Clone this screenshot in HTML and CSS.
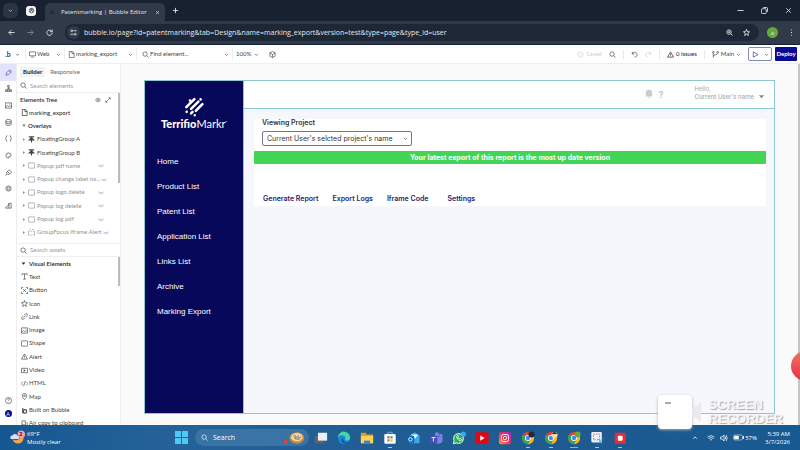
FILE: index.html
```html
<!DOCTYPE html>
<html lang="en">
<head>
  <meta charset="UTF-8">
  <title>Patentmarking | Bubble Editor</title>
  <link rel="stylesheet" href="styles.css">
</head>
<body>
  <svg class="sprite" aria-hidden="true">
    <symbol id="chevron" viewBox="0 0 16 16"><path d="M3 6l5 5 5-5"/></symbol>
    <symbol id="search" viewBox="0 0 16 16"><circle cx="7" cy="7" r="5"/><path d="M11 11l4 4"/></symbol>
    <symbol id="file" viewBox="0 0 16 16"><path d="M3 1h7l4 4v10H3zM9 1v5h5"/></symbol>
    <symbol id="caret" viewBox="0 0 16 16"><path class="solid" d="M5 4l6 4-6 4z"/></symbol>
    <symbol id="caret-down" viewBox="0 0 16 16"><path class="solid" d="M2 5h12l-6 7z"/></symbol>
    <symbol id="float" viewBox="0 0 16 16"><path d="M2 2h12M8 15V6M3 9l5-5 5 5z" class="thick"/></symbol>
    <symbol id="box" viewBox="0 0 16 16"><rect x="1" y="2" width="14" height="12" rx="1"/></symbol>
    <symbol id="focus" viewBox="0 0 16 16"><path d="M1 14V5h3M6 5h4M12 5h3v9M1 14h3M6 14h4M12 14h3M3 1h3M9 1h4"/></symbol>
    <symbol id="closed-eye" viewBox="0 0 16 16"><path d="M1 6c3 4 11 4 14 0M4 9l-1 2M8 10v3M12 9l1 2"/></symbol>
    <symbol id="image" viewBox="0 0 16 16"><path d="M1 2h14v12H1zM1 12l5-4 3 3 3-3 3 3M9 5h2"/></symbol>
    <symbol id="alert" viewBox="0 0 16 16"><path d="M8 2l7 12H1zM8 6v4M8 11v1"/></symbol>
    <symbol id="link" viewBox="0 0 16 16"><path d="M6 10l4-4M7 5l3-3q2-1 4 0 1 2 0 4l-3 3M9 11l-3 3q-2 1-4 0-1-2 0-4l3-3"/></symbol>
    <symbol id="star" viewBox="0 0 16 16"><path d="M8 1l2 5 5 .4-4 3.300 1.300 5.300L8 12l-4.300 3L5 9.700 1 6.400 6 6z"/></symbol>
    <symbol id="undo" viewBox="0 0 16 16"><path d="M3 2v5h5M3 6c3-5 11-4 11 3 0 3-3 5-6 5"/></symbol>
    <symbol id="back" viewBox="0 0 16 16"><path d="M15 8H2M8 2L2 8l6 6"/></symbol>
    <symbol id="close" viewBox="0 0 16 16"><path d="M3 3l10 10M13 3L3 13"/></symbol>
    <symbol id="plus" viewBox="0 0 16 16"><path d="M8 2v12M2 8h12"/></symbol>
    <symbol id="help" viewBox="0 0 16 16"><circle cx="8" cy="8" r="7"/><path d="M6 6c0-3 4-3 4 0 0 1-2 2-2 3M8 11v1"/></symbol>
    <symbol id="chrome" viewBox="0 0 32 32">
      <circle class="c-red" cx="16" cy="16" r="14"/>
      <path class="c-green" d="M16 16L4 9a14 14 0 0 0 12 21l6-11z"/>
      <path class="c-yellow" d="M16 30a14 14 0 0 0 12-21H16l6 11z"/>
      <circle class="c-white" cx="16" cy="16" r="7"/><circle class="c-blue" cx="16" cy="16" r="5"/>
    </symbol>
  </svg>

  <div class="tabs">
    <button class="tab-list" aria-label="Search tabs"><svg class="icon xs"><use href="#chevron"/></svg></button>
    <button class="pinned" aria-label="Pinned tab"><svg class="icon" viewBox="0 0 16 16"><circle cx="8" cy="8" r="5"/><path d="M8 3v5l4 3M8 8l-4 3M4 5l4 3 4-3"/></svg></button>
    <div class="tab">
      <b class="favicon">b</b>
      <span class="tab-title">Patentmarking | Bubble Editor</span>
      <button aria-label="Close tab"><svg class="icon xs"><use href="#close"/></svg></button>
    </div>
    <button class="new-tab" aria-label="New tab"><svg class="icon"><use href="#plus"/></svg></button>
    <div class="window-buttons">
      <button aria-label="Minimize"><svg class="icon" viewBox="0 0 16 16"><path d="M1 8h14"/></svg></button>
      <button aria-label="Restore"><svg class="icon" viewBox="0 0 16 16"><rect x="1" y="4" width="11" height="11" rx="2"/><path d="M5 1h7q3 0 3 3v7"/></svg></button>
      <button aria-label="Close"><svg class="icon"><use href="#close"/></svg></button>
    </div>
  </div>

  <div class="browser-bar">
    <button aria-label="Back"><svg class="icon"><use href="#back"/></svg></button>
    <button class="dim" aria-label="Forward"><svg class="icon flip"><use href="#back"/></svg></button>
    <button aria-label="Reload"><svg class="icon" viewBox="0 0 16 16"><path d="M14 8a6 6 0 1 1-2-4l2 2M14 1v5H9"/></svg></button>
    <div class="address">
      <span class="site-info"><svg class="icon" viewBox="0 0 16 16"><circle cx="4" cy="4" r="2"/><path d="M8 4h7M1 12h7"/><circle cx="12" cy="12" r="2"/></svg></span>
      <input type="text" aria-label="Address" value="bubble.io/page?id=patentmarking&amp;tab=Design&amp;name=marking_export&amp;version=test&amp;type=page&amp;type_id=user">
      <button aria-label="Zoom"><svg class="icon" viewBox="0 0 16 16"><use href="#search"/><path d="M5 7h4M7 5v4"/></svg></button>
      <button aria-label="Bookmark"><svg class="icon"><use href="#star"/></svg></button>
    </div>
    <button class="profile" aria-label="Profile">a</button>
    <button aria-label="Browser menu"><svg class="icon" viewBox="0 0 16 16"><path class="thick" d="M8 1v2M8 7v2M8 13v2"/></svg></button>
  </div>

  <div class="editor-bar">
    <button class="bubble-menu"><b>.b</b><svg class="icon xs"><use href="#chevron"/></svg></button>
    <button class="pick web"><svg class="icon" viewBox="0 0 16 16"><path d="M1 2h14v9H1zM5 14h6"/></svg><span>Web</span><svg class="icon xs"><use href="#chevron"/></svg></button>
    <button class="pick page-pick"><svg class="icon"><use href="#file"/></svg><span>marking_export</span><svg class="icon xs"><use href="#chevron"/></svg></button>
    <button class="pick find"><svg class="icon"><use href="#search"/></svg><span>Find element...</span><svg class="icon xs"><use href="#chevron"/></svg></button>
    <button class="pick zoom"><span>100%</span><svg class="icon xs"><use href="#chevron"/></svg></button>
    <button class="cube" aria-label="Components"><svg class="icon" viewBox="0 0 16 16"><path d="M8 1l6 3v8l-6 3-6-3V4zM2 4l6 4 6-4M8 8v7"/></svg></button>
    <div class="actions">
      <span class="saved"><svg class="icon" viewBox="0 0 16 16"><circle cx="8" cy="8" r="6"/><path d="M5 8l2 2 4-4"/></svg>Saved</span>
      <button aria-label="Search"><svg class="icon"><use href="#search"/></svg></button>
      <i class="rule"></i>
      <button aria-label="Undo"><svg class="icon"><use href="#undo"/></svg></button>
      <button class="faded" aria-label="Redo"><svg class="icon flip"><use href="#undo"/></svg></button>
      <i class="rule"></i>
      <button class="issues"><svg class="icon"><use href="#alert"/></svg>0 issues</button>
      <i class="rule"></i>
      <button class="branch"><svg class="icon" viewBox="0 0 16 16"><circle cx="3" cy="3" r="2"/><circle cx="13" cy="3" r="2"/><path d="M3 5v10M13 5c0 5-10 2-10 7"/></svg>Main<svg class="icon xs"><use href="#chevron"/></svg></button>
      <button class="preview" aria-label="Preview"><svg class="icon" viewBox="0 0 16 16"><path d="M3 2l11 6-11 6z"/></svg><svg class="icon xs"><use href="#chevron"/></svg></button>
      <button class="deploy">Deploy</button>
    </div>
  </div>

  <div class="workspace">
    <nav class="rail">
      <div class="rail-top">
        <a href="#design" class="active" aria-label="Design"><svg class="icon" viewBox="0 0 16 16"><path d="M2 14l2-6 7-6 4 4-7 7zM9 4l4 4"/></svg></a>
        <a href="#workflow" aria-label="Workflow"><svg class="icon" viewBox="0 0 16 16"><path d="M6 1h4v4H6zM8 5v5M3 11l5-4 5 4M1 11h4v4H1zM6 11h4v4H6zM11 11h4v4h-4z"/></svg></a>
        <a href="#views" aria-label="Views"><svg class="icon"><use href="#image"/></svg></a>
        <a href="#data" aria-label="Data"><svg class="icon" viewBox="0 0 16 16"><ellipse cx="8" cy="4" rx="6" ry="3"/><path d="M2 4v8c0 4 12 4 12 0V4M2 8c0 4 12 4 12 0"/></svg></a>
        <a href="#api" aria-label="API"><svg class="icon" viewBox="0 0 16 16"><path d="M5 1C1 1 5 7 1 8c4 1 0 7 4 7M11 1c4 0 0 6 4 7-4 1 0 7-4 7"/></svg></a>
        <a href="#styles" aria-label="Styles"><svg class="icon" viewBox="0 0 16 16"><path d="M8 14a6 6 0 1 1 6-6c0 3-3 2-5 2s1 4-1 4zM5 7h1M9 5h1"/></svg></a>
        <a href="#plugins" aria-label="Plugins"><svg class="icon" viewBox="0 0 16 16"><path d="M1 15l4-4M5 5l6 6M6 5l4-3 5 5-4 4-4 2-4-4z"/></svg></a>
        <a href="#settings" aria-label="Settings"><svg class="icon" viewBox="0 0 16 16"><circle cx="8" cy="8" r="6"/><circle cx="8" cy="8" r="3"/></svg></a>
        <a href="#logs" aria-label="Logs"><svg class="icon" viewBox="0 0 16 16"><path d="M1 14l4-5 3-1 1-5h5v11zM9 3v11"/></svg></a>
      </div>
      <div class="rail-bottom">
        <a href="#help" aria-label="Help"><svg class="icon"><use href="#help"/></svg></a>
        <a href="#account" class="account">A</a>
      </div>
    </nav>

    <aside class="panel">
      <div class="panel-tabs">
        <button class="selected">Builder</button>
        <button>Responsive</button>
      </div>
      <label class="search-box"><svg class="icon"><use href="#search"/></svg><input type="text" placeholder="Search elements" aria-label="Search elements"></label>
      <div class="tree-scroll">
        <div class="tree-head">
          <h2>Elements Tree</h2>
          <button aria-label="Toggle visibility"><svg class="icon" viewBox="0 0 16 16"><path d="M1 8c4-6 10-6 14 0-4 6-10 6-14 0z"/><circle cx="8" cy="8" r="2"/></svg></button>
          <button aria-label="Expand"><svg class="icon" viewBox="0 0 16 16"><path d="M2 14L14 2M9 2h5v5M2 9v5h5"/></svg></button>
        </div>
        <ul class="tree">
          <li class="root"><svg class="icon"><use href="#file"/></svg>marking_export</li>
          <li class="group"><svg class="icon xs"><use href="#caret-down"/></svg>Overlays</li>
          <li><svg class="icon xs"><use href="#caret"/></svg><svg class="icon"><use href="#float"/></svg><span>FloatingGroup A</span></li>
          <li><svg class="icon xs"><use href="#caret"/></svg><svg class="icon"><use href="#float"/></svg><span>FloatingGroup B</span></li>
          <li class="hidden-item"><svg class="icon xs"><use href="#caret"/></svg><svg class="icon"><use href="#box"/></svg><span>Popup pdf name</span><svg class="icon eye"><use href="#closed-eye"/></svg></li>
          <li class="hidden-item"><svg class="icon xs"><use href="#caret"/></svg><svg class="icon"><use href="#box"/></svg><span>Popup change label na...</span><svg class="icon eye"><use href="#closed-eye"/></svg></li>
          <li class="hidden-item"><svg class="icon xs"><use href="#caret"/></svg><svg class="icon"><use href="#box"/></svg><span>Popup logo delete</span><svg class="icon eye"><use href="#closed-eye"/></svg></li>
          <li class="hidden-item"><svg class="icon xs"><use href="#caret"/></svg><svg class="icon"><use href="#box"/></svg><span>Popup log delete</span><svg class="icon eye"><use href="#closed-eye"/></svg></li>
          <li class="hidden-item"><svg class="icon xs"><use href="#caret"/></svg><svg class="icon"><use href="#box"/></svg><span>Popup log pdf</span><svg class="icon eye"><use href="#closed-eye"/></svg></li>
          <li class="hidden-item"><svg class="icon xs"><use href="#caret"/></svg><svg class="icon"><use href="#focus"/></svg><span>GroupFocus Iframe Alert</span><svg class="icon eye"><use href="#closed-eye"/></svg></li>
        </ul>
      </div>
      <label class="search-box assets"><svg class="icon"><use href="#search"/></svg><input type="text" placeholder="Search assets" aria-label="Search assets"></label>
      <div class="palette-scroll">
        <ul class="palette">
          <li class="group"><svg class="icon xs"><use href="#caret-down"/></svg>Visual Elements</li>
          <li><svg class="icon" viewBox="0 0 16 16"><path d="M2 5V2h12v3M8 2v12M5 14h6"/></svg>Text</li>
          <li><svg class="icon" viewBox="0 0 16 16"><path d="M1 5V1h4M11 1h4v4M15 11v4h-4M5 15H1v-4M5 5l6 6M11 5l-6 6"/></svg>Button</li>
          <li><svg class="icon"><use href="#star"/></svg>Icon</li>
          <li><svg class="icon"><use href="#link"/></svg>Link</li>
          <li><svg class="icon"><use href="#image"/></svg>Image</li>
          <li><svg class="icon"><use href="#box"/></svg>Shape</li>
          <li><svg class="icon"><use href="#alert"/></svg>Alert</li>
          <li><svg class="icon" viewBox="0 0 16 16"><path d="M1 3h14v10H1z"/><path class="solid" d="M6 5l5 3-5 3z"/></svg>Video</li>
          <li><svg class="icon" viewBox="0 0 16 16"><path d="M4 4L0 8l4 4M12 4l4 4-4 4M10 2L6 14"/></svg>HTML</li>
          <li><svg class="icon" viewBox="0 0 16 16"><path d="M8 15C0 7 3 1 8 1s8 6 0 14z"/><circle cx="8" cy="6" r="2"/></svg>Map</li>
          <li><svg class="icon" viewBox="0 0 16 16"><path class="thick" d="M4 2v12"/><circle class="thick" cx="9" cy="10" r="4"/></svg>Built on Bubble</li>
          <li><svg class="icon" viewBox="0 0 16 16"><path d="M2 2h8v9H2zM5 14h9V5"/></svg>Air copy to clipboard</li>
        </ul>
      </div>
    </aside>

    <main class="canvas">
      <div class="page">
        <nav class="side-menu">
          <div class="brand">
            <svg class="brand-mark" viewBox="0 0 60 60"><path d="M9 33L31 11M22 38L42 18M35 43L53 25M19 15h0M10 46h0M48 12h0M32 55h0M22 50l4-4"/></svg>
            <div class="brand-name"><b>Terrifio</b>Markr<sup>&middot;</sup></div>
          </div>
          <a href="#home">Home</a>
          <a href="#products">Product List</a>
          <a href="#patents">Patent List</a>
          <a href="#applications">Application List</a>
          <a href="#links">Links List</a>
          <a href="#archive">Archive</a>
          <a href="#export">Marking Export</a>
        </nav>
        <div class="page-main">
          <header class="page-header">
            <svg class="bell" viewBox="0 0 16 16"><path d="M2 12l1-2V6a5 5 0 0 1 10 0v4l1 2zM6 13h4l-2 2z"/></svg>
            <b class="question">?</b>
            <div class="user">Hello,<br><b>Current User's name</b></div>
            <svg class="icon user-caret"><use href="#caret-down"/></svg>
          </header>
          <section class="card">
            <label class="project-label" for="project">Viewing Project</label>
            <div class="select-wrap">
              <select id="project"><option>Current User's selcted project's name</option></select>
              <svg class="icon xs"><use href="#chevron"/></svg>
            </div>
            <p class="banner">Your latest export of this report is the most up date version</p>
            <div class="report-tabs">
              <a href="#generate">Generate Report</a>
              <a href="#logs-export">Export Logs</a>
              <a href="#iframe">Iframe Code</a>
              <a href="#page-settings" class="last">Settings</a>
            </div>
          </section>
        </div>
      </div>
    </main>
    <span class="record-dot"></span>
    <div class="watermark">
      <span class="watermark-tile"></span>
      <svg class="lens" viewBox="0 0 10 24"><path d="M0 9L10 1v22L0 16z"/></svg>
      <div class="watermark-text">SCREEN<br>RECORDER</div>
    </div>
  </div>

  <footer class="taskbar">
    <div class="weather">
      <svg viewBox="0 0 32 32"><circle class="w-moon" cx="17" cy="17" r="12"/><circle class="w-cut" cx="12" cy="12" r="10"/><path class="w-cloud" d="M2 19a4 4 0 0 1 3-7 6 6 0 0 1 11 0 4 4 0 0 1 2 7z"/><circle class="w-badge" cx="24" cy="9" r="8"/></svg>
      <b class="weather-count">2</b>
      <span>69°F<br>Mostly clear</span>
    </div>
    <div class="dock">
      <button class="start" aria-label="Start"><i></i><i></i><i></i><i></i></button>
      <label class="task-search"><svg class="icon"><use href="#search"/></svg><input type="text" placeholder="Search" aria-label="Search Windows">
        <svg class="pie" viewBox="0 0 54 32"><path class="p-leaf" d="M4 17l9 8-4 4z"/><circle class="p-red" cx="7" cy="25" r="5"/><ellipse class="p-crust" cx="34" cy="16" rx="18" ry="14"/><ellipse class="p-top" cx="34" cy="14" rx="14" ry="10"/><path class="p-line" d="M25 12q4-5 7 0t-5 3M38 9q-4 5 0 7t6-4M29 18l12 1"/></svg>
      </label>
      <button aria-label="Task view"><svg viewBox="0 0 32 32"><path class="t-dark" d="M2 12h20v16H2z"/><path class="t-light" d="M9 4h21v18H9z"/></svg></button>
      <button aria-label="Edge"><svg viewBox="0 0 32 32"><circle class="e-blue" cx="16" cy="16" r="14"/><path class="e-green" d="M2 14a14 14 0 0 1 28 3c-2 7-14 5-11-1 2-7-12-9-17-2z"/><path class="e-cut" d="M14 16c-1 9 7 12 13 8-4 6-13 5-16 0-2-4 0-7 3-8z"/></svg></button>
      <button aria-label="Files"><svg viewBox="0 0 32 32"><path class="f-back" d="M2 4h11l3 4h14v20H2z"/><path class="f-front" d="M2 11h28v17H2z"/><path class="f-blue" d="M9 22h14v6H9z"/></svg></button>
      <button class="running" aria-label="Store"><svg viewBox="0 0 32 32"><path class="s-handle" d="M11 8V3h10v5"/><rect class="c-white" x="3" y="7" width="26" height="22" rx="3"/><path class="c-red" d="M10 12h5v5h-5z"/><path class="c-green" d="M17 12h5v5h-5z"/><path class="c-blue" d="M10 19h5v5h-5z"/><path class="c-yellow" d="M17 19h5v5h-5z"/></svg></button>
      <button aria-label="Outlook"><svg viewBox="0 0 32 32"><path class="o-light" d="M8 10L20 3l11 8v17H8z"/><path class="c-white" d="M12 8h16l-8 10z"/><rect class="o-dark" x="2" y="11" width="17" height="16" rx="3"/><circle class="ring" cx="10" cy="19" r="4"/></svg></button>
      <button aria-label="Teams"><svg viewBox="0 0 32 32"><circle class="tm-light" cx="18" cy="8" r="5"/><circle class="tm-light" cx="27" cy="10" r="4"/><path class="tm-light" d="M11 13h20v9q-2 7-10 7t-10-7z"/><rect class="tm-dark" x="2" y="11" width="17" height="16" rx="2"/><path class="ring" d="M6 15h9M10 15v9"/></svg></button>
      <button aria-label="WhatsApp"><svg viewBox="0 0 32 32"><circle class="wa" cx="15" cy="17" r="13"/><path class="wa" d="M3 30l1-8 7 7z"/><path class="ring" d="M3 29l2-7a11 11 0 1 1 5 5zM11 12q-1 8 9 10l2-3-3-2-2 1-3-3 1-2-2-3z"/><circle class="count-dot" cx="26" cy="7" r="6"/></svg></button>
      <button aria-label="YouTube"><svg viewBox="0 0 32 32"><rect class="yt" x="1" y="3" width="30" height="26" rx="2"/><path class="c-white" d="M12 10l10 6-10 6z"/></svg></button>
      <button aria-label="Instagram"><svg viewBox="0 0 32 32"><defs><linearGradient id="insta" x1="0" y1="1" x2="1" y2="0"><stop offset="0" stop-color="#ff9d32"/><stop offset=".5" stop-color="#ed2c65"/><stop offset="1" stop-color="#a22bc8"/></linearGradient></defs><rect x="2" y="2" width="28" height="28" rx="5" fill="url(#insta)"/><rect class="ring" x="8" y="8" width="16" height="16" rx="4"/><circle class="ring" cx="16" cy="16" r="4"/></svg></button>
      <button class="running" aria-label="Chrome"><svg viewBox="0 0 32 32"><use href="#chrome"/><circle class="t-black" cx="24" cy="8" r="7"/></svg></button>
      <button class="running" aria-label="Chrome, second profile"><svg viewBox="0 0 32 32"><use href="#chrome"/><circle class="p-top" cx="24" cy="9" r="7"/><path class="t-black" d="M18 7q6-9 12 0z"/></svg></button>
      <button class="running current" aria-label="Chrome, current profile"><svg viewBox="0 0 32 32"><use href="#chrome"/><circle class="avatar-green" cx="24" cy="8" r="7"/></svg></button>
      <button class="running" aria-label="Snipping Tool"><svg viewBox="0 0 32 32"><rect class="t-light" x="3" y="2" width="24" height="24" rx="3"/><path class="snip" d="M8 7h14v13H8z"/><path class="cut" d="M18 18l10 11M29 17L18 28"/></svg></button>
      <button class="running" aria-label="Recorder"><svg viewBox="0 0 32 32"><rect class="rec" x="4" y="4" width="25" height="25" rx="2"/><rect class="c-white" x="11" y="11" width="11" height="11" rx="2"/></svg></button>
    </div>
    <div class="tray">
      <svg class="icon xs up"><use href="#chevron"/></svg>
      <svg class="icon wifi" viewBox="0 0 16 16"><path d="M1 6q7-6 14 0M3 9q5-4 10 0M6 12q2-2 4 0"/></svg>
      <svg class="icon" viewBox="0 0 16 16"><path d="M1 6h3l4-4v12l-4-4H1zM10 5q3 3 0 6M12 2q5 6 0 12"/></svg>
      <svg class="battery" viewBox="0 0 22 12"><rect x="1" y="1" width="18" height="10" rx="3"/><path class="c-white" d="M3 3h8v6H3zM20 4h2v4h-2z"/></svg>
      <span>57%</span>
      <time datetime="2026-03-07T05:39">5:39 AM<br>3/7/2026</time>
    </div>
  </footer>
</body>
</html>
```
FILE: styles.css
```css
* {
  box-sizing: border-box;
}

body {
  display: flex;
  flex-direction: column;
  height: 100vh;
  margin: 0;
  overflow: hidden;
  background-color: #fafafa;
  color: #444;
  font-family: "Open Sans", "Noto Sans", sans-serif;
  font-size: 6px;
  line-height: 8px;
}

button, input, select {
  font: inherit;
  color: inherit;
  border: none;
  background: none;
  padding: 0;
  margin: 0;
  min-width: 0;
}

button {
  display: flex;
  align-items: center;
  justify-content: center;
}

a {
  color: inherit;
  text-decoration: none;
}

ul, h2, p {
  margin: 0;
  padding: 0;
  list-style: none;
}

.sprite {
  display: none;
}

.icon {
  width: 7px;
  height: 7px;
  flex: none;
  fill: none;
  stroke: currentColor;
  stroke-width: 1.5;
}

.icon.xs {
  width: 5px;
  height: 5px;
  stroke-width: 2;
}

.solid {
  fill: currentColor;
  stroke: none;
}

.thick {
  stroke-width: 2.5;
}

.flip {
  transform: scaleX(-1);
}

/* browser */
.tabs {
  display: flex;
  align-items: center;
  height: 21px;
  flex: none;
  background-color: #18212f;
  color: #e4e8ee;
}

.tabs .icon, .browser-bar .icon {
  stroke-width: 2;
}

.tab-list {
  width: 15px;
  height: 15px;
  margin-left: 3px;
  border-radius: 5px;
  background-color: #2a3443;
}

.pinned {
  width: 10px;
  height: 10px;
  margin: 0 9px 0 8px;
  border-radius: 3px;
  background-color: #f2f4f6;
  color: #555;
}

.tab {
  display: flex;
  align-items: center;
  align-self: flex-end;
  width: 120px;
  height: 18px;
  padding: 0 5px;
  border-radius: 5px 5px 0 0;
  background-color: #303a49;
}

.favicon {
  width: 11px;
  color: #171b50;
}

.tab-title {
  flex: 1;
  white-space: nowrap;
}

.new-tab {
  margin-left: 7px;
}

.window-buttons {
  display: flex;
  gap: 17px;
  margin: 0 8px 0 auto;
}

.browser-bar {
  display: flex;
  align-items: center;
  height: 24px;
  flex: none;
  padding: 0 5px 0 8px;
  gap: 12px;
  background-color: #303a49;
  border-bottom: 1px solid #14223e;
  color: #e2e7ed;
}

.dim {
  color: #7c8593;
}

.address {
  display: flex;
  flex: 1;
  align-items: center;
  height: 17px;
  padding: 0 9px 0 2px;
  gap: 10px;
  border-radius: 9px;
  background-color: #1d2735;
}

.site-info {
  display: flex;
  align-items: center;
  justify-content: center;
  width: 13px;
  height: 13px;
  margin-right: -6px;
  border-radius: 50%;
  background-color: #303a49;
}

.address input {
  flex: 1;
  height: 12px;
  font-size: 7px;
}

.profile {
  width: 11px;
  height: 11px;
  margin: 0 -2px 0 -4px;
  border-radius: 50%;
  background-color: #67a83a;
}

/* editor toolbar */
.editor-bar {
  display: flex;
  align-items: center;
  height: 19px;
  flex: none;
  background-color: #fff;
  border-bottom: 1px solid #eee;
  white-space: nowrap;
}

.editor-bar, .workspace {
  font-family: Lato, "Open Sans", sans-serif;
}

.bubble-menu {
  width: 25px;
  gap: 4px;
}

.bubble-menu b {
  font-size: 7px;
}

.pick {
  height: 12px;
  padding: 0 3px;
  gap: 1px;
  border-left: 1px solid #eee;
}

.pick span {
  flex: 1;
  text-align: left;
}

.web {
  width: 39px;
}

.page-pick {
  width: 72px;
}

.find {
  width: 96px;
  padding-left: 5px;
}

.zoom {
  width: 30px;
}

.cube {
  padding-left: 7px;
}

.actions {
  display: flex;
  align-items: center;
  gap: 7px;
  margin: 0 3px 0 auto;
}

.saved {
  display: flex;
  align-items: center;
  gap: 2px;
}

.saved, .faded {
  color: #d0d0d0;
}

.rule {
  width: 1px;
  height: 9px;
  background-color: #e8e8e8;
}

.issues, .branch {
  gap: 2px;
}

.issues {
  color: #222;
}

.preview {
  width: 24px;
  height: 14px;
  gap: 5px;
  border: 1px solid #8589b8;
  border-radius: 2px;
  color: #2b309c;
}

.deploy {
  height: 14px;
  width: 22px;
  margin-left: -4px;
  border-radius: 1px;
  background-color: #0a0b94;
  color: #fff;
  font-weight: bold;
}

/* left side */
.workspace {
  position: relative;
  display: flex;
  flex: 1;
  min-height: 0;
}

.rail {
  display: flex;
  flex-direction: column;
  justify-content: space-between;
  width: 17px;
  flex: none;
  padding-bottom: 8px;
  background-color: #fff;
  border-right: 1px solid #eee;
}

.rail-top {
  display: grid;
  grid-auto-rows: 1fr;
  height: 150px;
}

.rail a {
  display: flex;
  align-items: center;
  justify-content: center;
}

.rail .active {
  background-color: #e2e3fb;
  color: #4447a8;
}

.rail-bottom {
  display: flex;
  flex-direction: column;
  align-items: center;
  gap: 6px;
}

.rail .account {
  width: 7px;
  height: 7px;
  border-radius: 50%;
  background-color: #07088e;
  color: #fff;
  font-size: 5px;
}

.panel {
  display: flex;
  flex-direction: column;
  width: 104px;
  flex: none;
  background-color: #fff;
  border-right: 1px solid #eee;
  white-space: nowrap;
}

.panel-tabs {
  display: flex;
  height: 15px;
  flex: none;
  align-items: center;
  gap: 2px;
  padding: 0 3px;
  color: #666;
}

.panel-tabs button {
  height: 10px;
  padding: 0 3px;
}

.panel-tabs .selected {
  background-color: #f2f2f2;
  color: #222;
  font-weight: bold;
}

.search-box {
  display: flex;
  align-items: center;
  height: 14px;
  flex: none;
  padding: 0 3px;
  gap: 3px;
  border-bottom: 1px solid #eee;
}

.search-box input {
  flex: 1;
}

input::placeholder {
  color: #999;
  opacity: 1;
}

.assets {
  border-top: 1px solid #eee;
}

.tree-scroll {
  height: 150px;
  flex: none;
  border-image: linear-gradient(#bbb 90px, #fff 90px) 1;
  border-style: solid;
  border-width: 0 2px 0 0;
}

.tree-head {
  display: flex;
  align-items: center;
  height: 13px;
  gap: 4px;
  padding: 0 7px 0 3px;
}

.tree-head h2 {
  flex: 1;
  color: #333;
  font-size: 6px;
  font-weight: 600;
}

.tree-head .icon {
  width: 6px;
  height: 6px;
}

.tree, .palette {
  display: grid;
  grid-template-columns: 100%;
  grid-auto-rows: 1fr;
  height: 133px;
}

.tree li, .palette li {
  display: flex;
  align-items: center;
  gap: 1px;
  padding: 0 14px 0 4px;
}

.tree li > .xs {
  color: #777;
  width: 6px;
}

.tree span {
  margin-left: 1px;
}

.tree .hidden-item {
  color: #929292;
}

.tree .eye {
  margin-left: auto;
  width: 6px;
}

.group, .root {
  color: #222;
}

.group {
  font-weight: 600;
}

.palette-scroll {
  flex: 1;
  min-height: 0;
  overflow: hidden;
  border-image: linear-gradient(#bbb 30px, #fff 30px) 1;
  border-style: solid;
  border-width: 0 2px 0 0;
}

.palette {
  height: 173px;
}

.palette .xs {
  margin-right: 2px;
}

/* canvas */
.canvas {
  display: flex;
  flex: 1;
  min-width: 0;
  padding: 16px 23px 11px;
  border-right: 2px solid #c4c4c4;
}

.page {
  display: flex;
  flex: 1;
  border: 1px solid #8cc7d0;
  background-color: #f6f7fd;
  font-family: Inter, "Liberation Sans", sans-serif;
}

.side-menu {
  display: flex;
  flex-direction: column;
  width: 98px;
  flex: none;
  background-color: #08085a;
  color: #fff;
  font-family: "Liberation Sans", Arial, sans-serif;
  font-size: 8px;
}

.side-menu a {
  height: 25px;
  padding-left: 12px;
  line-height: 25px;
}

.brand {
  display: flex;
  flex-direction: column;
  align-items: center;
  height: 68px;
  padding-top: 14px;
}

.brand-mark {
  width: 22px;
  height: 22px;
  fill: none;
  stroke: #fff;
  stroke-width: 7;
  stroke-linecap: round;
}

.brand-name {
  font-family: Lato, sans-serif;
  font-size: 11px;
  line-height: 14px;
}

.brand-name b {
  font-weight: 900;
}

.brand-name sup {
  font-size: 6px;
  line-height: 0;
}

.page-main {
  flex: 1;
  min-width: 0;
  border-left: 1px solid #8cc7d0;
}

.page-header {
  display: flex;
  align-items: center;
  height: 28px;
  padding: 0 9px 4px 0;
  background-color: #fff;
  border-bottom: 1px solid #8cc7d0;
  color: #aaa;
}

.bell {
  width: 10px;
  height: 10px;
  margin: 3px 0 0 auto;
  fill: #ccc;
}

.question {
  margin: 4px 31px 0 4px;
  color: #c2c2c2;
  font-size: 9px;
}

.user b {
  font-weight: 500;
}

.user-caret {
  margin: 8px 0 0 4px;
  color: #888;
}

.card {
  margin: 10px 8px 0 10px;
  background-color: #fff;
}

.project-label {
  display: block;
  padding: 0 8px;
  color: #333;
  font-size: 7px;
  font-weight: 600;
}

.select-wrap {
  position: relative;
  width: 150px;
  margin: 4px 8px 5px;
}

.select-wrap select {
  display: block;
  width: 100%;
  height: 15px;
  padding: 0 4px;
  appearance: none;
  border: 1px solid #77758c;
  border-radius: 2px;
  background-color: #fff;
  color: #333;
  font-size: 7px;
}

.select-wrap .icon {
  position: absolute;
  right: 4px;
  top: 5px;
}

.banner {
  height: 13px;
  border-radius: 1px;
  background-color: #41d553;
  color: #fff;
  font-size: 7px;
  font-weight: bold;
  line-height: 13px;
  text-align: center;
}

.report-tabs {
  display: flex;
  gap: 14px;
  padding: 31px 9px 3px;
  color: #25256f;
  font-size: 7px;
  font-weight: 600;
}

.report-tabs .last {
  margin-left: 5px;
}

/* recorder overlay */
.record-dot {
  position: absolute;
  right: -21px;
  top: 287px;
  width: 30px;
  height: 30px;
  border-radius: 50%;
  background: linear-gradient(#ef7164, #e83142);
}

.watermark {
  position: absolute;
  right: 17px;
  bottom: -4px;
  z-index: 1;
  display: flex;
  align-items: center;
}

.watermark-tile {
  width: 34px;
  height: 34px;
  padding: 7px;
  border-radius: 4px;
  background-color: #fff;
  box-shadow: 0 1px 3px #aaa;
}

.watermark-tile::before {
  content: "";
  display: block;
  width: 6px;
  height: 2px;
  background-color: #aaa;
}

.lens {
  width: 9px;
  height: 24px;
  fill: #e9e9ee;
}

.watermark-text {
  margin-left: 8px;
  color: #f6f6fa;
  font-family: "Liberation Sans", sans-serif;
  font-size: 13px;
  font-weight: bold;
  line-height: 14px;
  text-shadow: 1px 1px 1px #aaa;
}

/* taskbar */
.taskbar {
  position: relative;
  display: flex;
  align-items: center;
  height: 25px;
  flex: none;
  background: linear-gradient(90deg, #155790, #246298 20%, #205b91 60%, #175a92);
  color: #fff;
}

.weather {
  position: relative;
  display: flex;
  align-items: center;
  width: 174px;
  padding-left: 10px;
  gap: 2px;
}

.weather svg {
  width: 15px;
  height: 15px;
}

.weather-count {
  position: absolute;
  left: 19px;
  top: 0;
  color: #522;
}

.dock {
  display: flex;
  align-items: center;
  gap: 9px;
}

.dock button {
  position: relative;
  width: 14px;
  height: 20px;
}

.dock button svg {
  width: 14px;
  height: 14px;
}

.dock .start {
  display: grid;
  grid-template-columns: 6px 6px;
  grid-template-rows: 6px 6px;
  gap: 1px;
  align-content: center;
  align-items: stretch;
  margin-right: -2px;
}

.start i {
  background-color: #50c8f5;
}

.task-search {
  display: flex;
  align-items: center;
  width: 114px;
  height: 17px;
  padding: 0 4px 0 6px;
  gap: 5px;
  margin-right: -4px;
  border-radius: 9px;
  background-color: #3a73a5;
}

.task-search input {
  flex: 1;
  width: 20px;
  font-size: 7px;
}

.task-search input::placeholder {
  color: #fff;
}

.pie {
  width: 22px;
  height: 14px;
}

.running::after {
  content: "";
  position: absolute;
  left: 5px;
  bottom: 0;
  width: 4px;
  height: 1px;
  background-color: #a4c5df;
}

.current::after {
  left: 3px;
  width: 8px;
  background-color: #5cc2ff;
}

.tray {
  display: flex;
  align-items: center;
  gap: 5px;
  margin: 0 10px 0 auto;
}

.tray .icon {
  width: 8px;
  height: 8px;
}

.tray .up {
  width: 6px;
  margin-right: 4px;
  transform: rotate(180deg);
}

.battery {
  width: 11px;
  height: 7px;
  margin-right: -4px;
  fill: none;
  stroke: #fff;
}

.tray time {
  margin-left: 3px;
  text-align: right;
}

/* artwork colours */
.c-red, .p-red { fill: #e44335; }
.c-green { fill: #33a852; }
.c-yellow { fill: #fbbd04; }
.c-white { fill: #fff; }
.c-blue { fill: #4388f4; }
.w-moon { fill: #f5a444; }
.w-cut { fill: #1c5b93; }
.w-cloud { fill: #d6e4fc; }
.w-badge { fill: #f3a0aa; }
.p-leaf { fill: #348b3f; }
.p-crust { fill: #c98c45; }
.p-top { fill: #f2dbab; }
.p-line { fill: none; stroke: #80502b; stroke-width: 2; }
.t-dark { fill: #5e656d; }
.t-light { fill: #edf0f4; }
.t-black { fill: #29292a; }
.e-blue { fill: #178bda; }
.e-green { fill: #49d5a3; }
.e-cut { fill: #115096; }
.f-back { fill: #d99c1d; }
.f-front { fill: #ffd157; }
.f-blue { fill: #3586cf; }
.s-handle { fill: none; stroke: #62bff0; stroke-width: 2; }
.o-light { fill: #37a9e8; }
.o-dark { fill: #0869b9; }
.ring { fill: none; stroke: #fff; stroke-width: 2; }
.tm-light { fill: #7b83e5; }
.tm-dark { fill: #464db4; }
.wa { fill: #20ae58; }
.count-dot { fill: #38a7f0; }
.yt { fill: #e30613; }
.avatar-green { fill: #67a83a; }
.snip { fill: none; stroke: #ae5254; stroke-width: 2; stroke-dasharray: 3; }
.cut { stroke: #55b5e8; stroke-width: 2; }
.rec { fill: #e92e32; }
```
